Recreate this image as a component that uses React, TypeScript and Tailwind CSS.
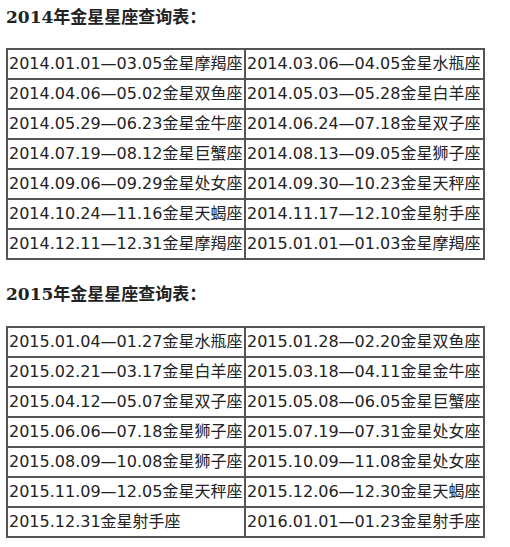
import React from "react";

const table2014: [string, string][] = [
  ["2014.01.01—03.05金星摩羯座", "2014.03.06—04.05金星水瓶座"],
  ["2014.04.06—05.02金星双鱼座", "2014.05.03—05.28金星白羊座"],
  ["2014.05.29—06.23金星金牛座", "2014.06.24—07.18金星双子座"],
  ["2014.07.19—08.12金星巨蟹座", "2014.08.13—09.05金星狮子座"],
  ["2014.09.06—09.29金星处女座", "2014.09.30—10.23金星天秤座"],
  ["2014.10.24—11.16金星天蝎座", "2014.11.17—12.10金星射手座"],
  ["2014.12.11—12.31金星摩羯座", "2015.01.01—01.03金星摩羯座"],
];

const table2015: [string, string][] = [
  ["2015.01.04—01.27金星水瓶座", "2015.01.28—02.20金星双鱼座"],
  ["2015.02.21—03.17金星白羊座", "2015.03.18—04.11金星金牛座"],
  ["2015.04.12—05.07金星双子座", "2015.05.08—06.05金星巨蟹座"],
  ["2015.06.06—07.18金星狮子座", "2015.07.19—07.31金星处女座"],
  ["2015.08.09—10.08金星狮子座", "2015.10.09—11.08金星处女座"],
  ["2015.11.09—12.05金星天秤座", "2015.12.06—12.30金星天蝎座"],
  ["2015.12.31金星射手座", "2016.01.01—01.23金星射手座"],
];

const Heading = ({ children }: { children: React.ReactNode }) => (
  <h2
    className="text-[17px] leading-[22px] font-bold text-[#222]"
    style={{ fontFamily: '"DejaVu Serif", "Noto Sans CJK SC", serif' }}
  >
    {children}
  </h2>
);

const VenusTable = ({ rows }: { rows: [string, string][] }) => (
  <table
    className="border-collapse table-fixed w-[477px] text-[16px] text-[#222]"
    style={{ fontFamily: '"DejaVu Sans", "Noto Sans CJK SC", sans-serif' }}
  >
    <colgroup>
      <col className="w-[238px]" />
      <col className="w-[239px]" />
    </colgroup>
    <tbody>
      {rows.map((row, i) => (
        <tr key={i} className="h-[30px]">
          {row.map((cell, j) => (
            <td
              key={j}
              className="border-2 border-[#555] px-[1px] py-0 leading-[26px] whitespace-nowrap align-middle"
            >
              {cell}
            </td>
          ))}
        </tr>
      ))}
    </tbody>
  </table>
);

export default function App() {
  return (
    <div className="bg-white w-[510px] min-h-[547px] px-[6px] pt-[6px]">
      <Heading>2014年金星星座查询表：</Heading>
      <div className="mt-[20px]">
        <VenusTable rows={table2014} />
      </div>
      <div className="mt-[23px]">
        <Heading>2015年金星星座查询表：</Heading>
      </div>
      <div className="mt-[21px]">
        <VenusTable rows={table2015} />
      </div>
    </div>
  );
}
